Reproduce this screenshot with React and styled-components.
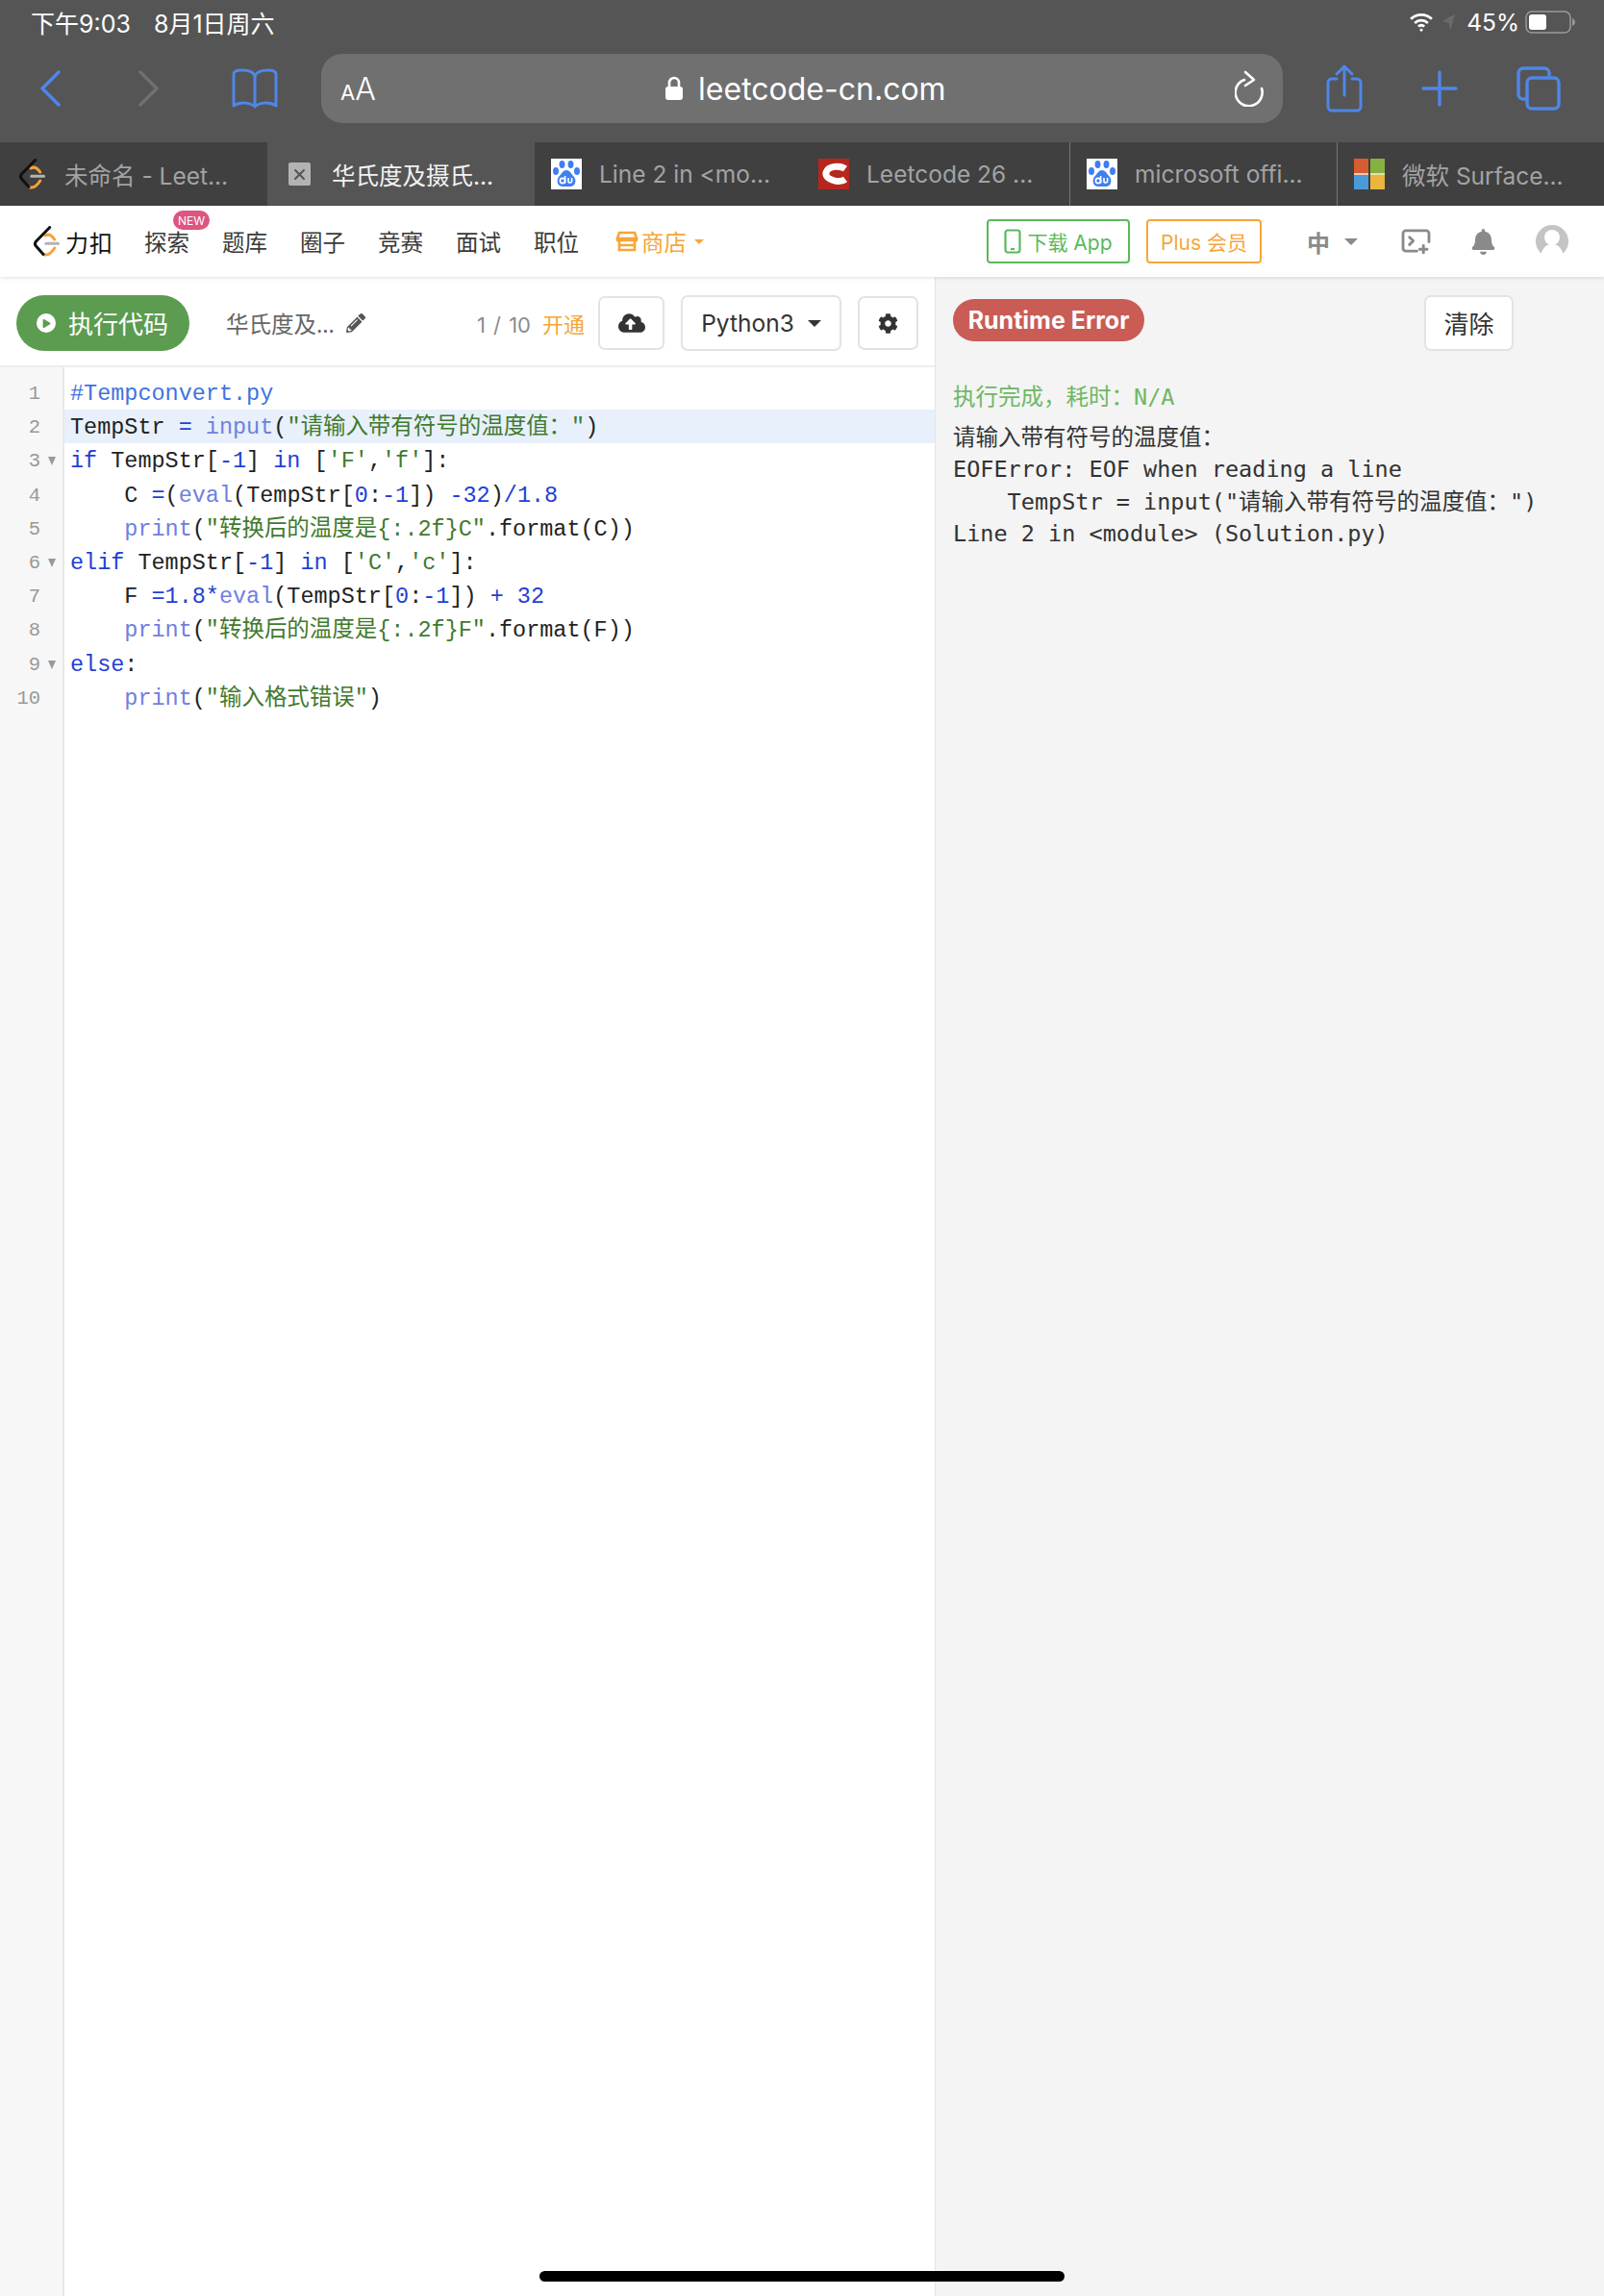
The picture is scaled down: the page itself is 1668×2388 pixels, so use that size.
import React from "react";
import styled, { createGlobalStyle } from "styled-components";
import { FaCloudUploadAlt, FaCog, FaPencilAlt, FaBell, FaPlay } from "react-icons/fa";

const sans = `"Inter", "Noto Sans CJK SC", sans-serif`;
const cjk = `"Noto Sans", "Noto Sans CJK SC", sans-serif`;

const Global = createGlobalStyle`
  html, body { margin: 0; padding: 0; background: #fff; }
  * { box-sizing: border-box; }
`;

const Page = styled.div`
  width: 1668px;
  height: 2388px;
  display: flex;
  flex-direction: column;
  overflow: hidden;
  position: relative;
  font-family: ${cjk};
`;

const Chrome = styled.div`
  background: #555555;
  height: 148px;
  display: flex;
  flex-direction: column;
`;
const StatusBar = styled.div`
  height: 56px;
  padding: 0 30px 10px 32px;
  display: flex;
  align-items: center;
  justify-content: space-between;
  color: #fff;
  font-size: 24.5px;
  font-family: ${sans};
`;
const StatusLeft = styled.div`
  display: flex;
  gap: 24px;
  font-size: 25px;
`;
const StatusRight = styled.div`
  display: flex;
  align-items: center;
  gap: 8px;
`;
const Percent = styled.span`
  margin: 0 -2px 0 3px;
`;
const Toolbar = styled.div`
  height: 72px;
  display: flex;
  align-items: center;
`;
const NavIcons = styled.div`
  width: 334px;
  display: flex;
  align-items: center;
  padding-left: 41px;
  gap: 81px;
`;
const BookSlot = styled.span`
  display: flex;
  margin-left: -6px;
`;
const AddressBar = styled.div`
  width: 1000px;
  height: 72px;
  background: #707070;
  border-radius: 22px;
  display: flex;
  align-items: center;
  justify-content: space-between;
  padding: 0 18px 0 20px;
  color: #fff;
`;
const AaLabel = styled.div`
  font-family: ${sans};
  font-size: 32px;
  font-weight: 300;
  span { font-size: 22px; font-weight: 400; }
`;
const Url = styled.div`
  display: flex;
  align-items: center;
  gap: 15px;
  font-family: ${sans};
  font-size: 32px;
`;
const ToolRight = styled.div`
  flex: 1;
  display: flex;
  align-items: center;
  padding-left: 45px;
  gap: 61px;
`;

const Tabs = styled.div`
  display: flex;
  height: 66px;
  background: #404040;
`;
const Tab = styled.div`
  width: 278px;
  height: 66px;
  flex: none;
  display: flex;
  align-items: center;
  gap: 18px;
  padding-left: 17px;
  font-size: 24.5px;
  font-family: ${sans};
  color: ${(p) => (p.$active ? "#f2f2f2" : "#a3a3a3")};
  background: ${(p) => (p.$active ? "#555555" : "#404040")};
  border-left: ${(p) => (p.$divider ? "1px solid #777" : "none")};
  white-space: nowrap;
`;
const TabIconBox = styled.span`
  width: 32px;
  height: 32px;
  flex: none;
  display: flex;
  align-items: center;
  justify-content: center;
`;
const TabClose = styled.div`
  width: 23px;
  height: 24px;
  background: #b3b3b3;
  border-radius: 2px;
  display: flex;
  align-items: center;
  justify-content: center;
`;

const NavBar = styled.div`
  height: 74px;
  background: #fff;
  display: flex;
  align-items: center;
  position: relative;
  z-index: 2;
  box-shadow: 0 1px 4px rgba(0, 0, 0, 0.13);
  padding: 0 37px 0 35px;
`;
const Brand = styled.div`
  display: flex;
  align-items: center;
  gap: 6px;
  font-size: 24px;
  letter-spacing: 1px;
  color: #111;
  margin-right: 32px;
`;
const NavItem = styled.div`
  position: relative;
  font-size: 23.5px;
  color: ${(p) => p.$color || "#3a3a3a"};
  margin-left: ${(p) => p.$ml || 0}px;
  margin-right: 34px;
  display: flex;
  align-items: center;
  gap: 3px;
`;
const NewBadge = styled.span`
  position: absolute;
  top: -15px;
  right: -21px;
  width: 38px;
  height: 20px;
  border-radius: 10px;
  background: #dd5580;
  color: #fff;
  font-size: 12px;
  font-family: ${sans};
  display: flex;
  align-items: center;
  justify-content: center;
`;
const Spacer = styled.div`
  flex: 1;
`;
const Caret = styled.span`
  width: 0;
  height: 0;
  margin-left: ${(p) => p.$ml || 0}px;
  border-left: ${(p) => p.$s}px solid transparent;
  border-right: ${(p) => p.$s}px solid transparent;
  border-top: ${(p) => p.$s}px solid ${(p) => p.$color};
`;
const OutlineBtn = styled.div`
  width: ${(p) => p.$w}px;
  height: 46px;
  border: 2px solid ${(p) => p.$color};
  color: ${(p) => p.$color};
  border-radius: 4px;
  display: flex;
  align-items: center;
  justify-content: center;
  gap: 6px;
  font-size: 21px;
  font-family: ${sans};
  margin-right: ${(p) => p.$mr}px;
`;
const LangBox = styled.div`
  display: flex;
  align-items: center;
  gap: 15px;
  color: #8a8a8a;
  font-size: 24px;
  font-weight: 700;
  margin-right: 45px;
`;
const IconGap = styled.div`
  display: flex;
  align-items: center;
  margin-right: ${(p) => p.$mr}px;
`;

const Main = styled.div`
  flex: 1;
  display: flex;
  min-height: 0;
`;
const Editor = styled.div`
  width: 973px;
  display: flex;
  flex-direction: column;
  border-right: 1px solid #e5e5e5;
`;
const EditorBar = styled.div`
  height: 94px;
  flex: none;
  border-bottom: 2px solid #ededed;
  display: flex;
  align-items: center;
  padding: 4px 17px 0;
`;
const RunButton = styled.div`
  width: 180px;
  height: 58px;
  border-radius: 29px;
  background: #5c9c50;
  color: #fff;
  font-size: 26px;
  display: flex;
  align-items: center;
  gap: 13px;
  padding-left: 21px;
  margin-right: 38px;
`;
const PlayDot = styled.span`
  width: 20px;
  height: 20px;
  background: #fff;
  border-radius: 50%;
  color: #5c9c50;
  display: flex;
  align-items: center;
  justify-content: center;
  font-size: 9px;
  padding-left: 1px;
`;
const FileName = styled.div`
  font-size: 23.5px;
  color: #666;
  display: flex;
  align-items: center;
  gap: 12px;
`;
const Quota = styled.div`
  margin-left: auto;
  font-size: 22px;
  font-family: ${sans};
  word-spacing: 2px;
  color: #8c8c8c;
  margin-right: 14px;
  b { color: #f5a63a; font-weight: 400; margin-left: 12px; font-family: ${cjk}; }
`;
const SquareBtn = styled.div`
  width: ${(p) => p.$w}px;
  height: ${(p) => p.$h || 58}px;
  border: 2px solid #e3e3e3;
  border-radius: 7px;
  background: #fff;
  color: #333;
  display: flex;
  align-items: center;
  justify-content: center;
  font-size: 24.5px;
  margin-left: ${(p) => p.$ml || 0}px;
  gap: 14px;
  font-family: ${sans};
`;

const CodeArea = styled.div`
  flex: 1;
  display: flex;
`;
const Gutter = styled.div`
  width: 67px;
  flex: none;
  background: #f7f7f7;
  border-right: 2px solid #e8e8e8;
  padding-top: 9px;
`;
const GutterLine = styled.div`
  height: 35.2px;
  line-height: 37px;
  position: relative;
  text-align: right;
  padding-right: 23px;
  color: #999;
  font-size: 20.5px;
  font-family: "Liberation Mono", monospace;
`;
const Fold = styled.span`
  position: absolute;
  right: 7px;
  top: 14px;
  width: 0;
  height: 0;
  border-left: 4px solid transparent;
  border-right: 4px solid transparent;
  border-top: 9px solid #999;
`;
const Code = styled.div`
  flex: 1;
  padding-top: 9px;
  font-family: "Liberation Mono", "Noto Sans CJK SC", monospace;
  font-size: 23.47px;
  color: #222;
`;
const CodeLine = styled.div`
  height: 35.2px;
  line-height: 37px;
  padding-left: 6px;
  white-space: pre;
  background: ${(p) => (p.$active ? "#e8f0fb" : "transparent")};
`;
const Kw = styled.span`color: #1f3fd6;`;
const Bi = styled.span`color: #6f7fe0;`;
const Str = styled.span`color: #3f7a2e;`;
const Cm = styled.span`color: #3f72e0;`;
const Zh = styled.span`
  font-family: "Noto Sans CJK SC", sans-serif;
  font-size: 23.47px;
  line-height: 0;
`;

const Output = styled.div`
  flex: 1;
  background: #f4f4f4;
  padding-left: 18px;
`;
const OutputBar = styled.div`
  height: 94px;
  display: flex;
  justify-content: space-between;
  padding-top: 19px;
`;
const ErrorPill = styled.div`
  width: 199px;
  height: 44px;
  margin-top: 4px;
  border-radius: 22px;
  background: #c95c55;
  color: #fff;
  font-family: ${sans};
  font-size: 25px;
  font-weight: 700;
  display: flex;
  align-items: center;
  justify-content: center;
`;
const ClearBtn = styled.div`
  width: 93px;
  height: 58px;
  border: 2px solid #e3e3e3;
  border-radius: 7px;
  background: #fff;
  color: #333;
  font-size: 26px;
  display: flex;
  align-items: center;
  justify-content: center;
  margin-right: 94px;
`;
const Pre = styled.div`
  font-family: "DejaVu Sans Mono", "Noto Sans CJK SC", monospace;
  font-size: 23.5px;
  line-height: 33.5px;
  color: #333;
  white-space: pre;
`;
const DoneLine = styled(Pre)`
  color: #6fb765;
  margin: 15px 0 8px;
`;

const HomeBar = styled.div`
  position: absolute;
  left: 561px;
  bottom: 15px;
  width: 546px;
  height: 11px;
  border-radius: 6px;
  background: #000;
`;

const Blue = "#4f86e8";

const LcLogo = () => (
  <svg width="27" height="32" viewBox="0 0 27 32" fill="none" strokeLinecap="round" strokeLinejoin="round">
    <path d="M12 10 Q17 7 21.700 14" stroke="#f5a33a" strokeWidth="3" />
    <path d="M10 29.500 Q16 32 21.700 23" stroke="#f5a33a" strokeWidth="3" />
    <path d="M16.700 1.500 L2.500 16 Q0.500 18.500 2.500 21 L10 29.500" stroke="#111" strokeWidth="3" />
    <path d="M12.700 18.300 H25.500" stroke="#b3b3b3" strokeWidth="3" />
  </svg>
);

const BaiduIcon = () => (
  <svg width="32" height="32" viewBox="0 0 32 32">
    <rect width="32" height="32" fill="#fff" />
    <g fill="#3f7ff0">
      <ellipse cx="11.500" cy="6" rx="3" ry="4" />
      <ellipse cx="20.500" cy="6" rx="3" ry="4" />
      <ellipse cx="5" cy="13" rx="3" ry="4" />
      <ellipse cx="27" cy="13" rx="3" ry="4" />
      <path d="M16 12c-4 0-5 4-8 7-3 4-1 10 4 10h8c5 0 7-6 4-10-3-3-4-7-8-7z" />
    </g>
    <g fill="none" stroke="#fff" strokeWidth="1.600">
      <circle cx="12" cy="23" r="2.600" />
      <path d="M14.600 18v7.600M18 20v3.500c0 2 3.600 2 3.600 0V20" />
    </g>
  </svg>
);

const CIcon = () => (
  <svg width="32" height="32" viewBox="0 0 32 32">
    <rect width="32" height="32" fill="#b6261d" />
    <path d="M28 10.500 C23 7 10 7 8 14.500 C6.500 22 22 26 28 21.500" fill="none" stroke="#fff" strokeWidth="7" />
  </svg>
);

const MsIcon = () => (
  <svg width="32" height="32" viewBox="0 0 32 32">
    <rect width="15" height="15" fill="#d85c32" />
    <rect x="17" width="15" height="15" fill="#87b042" />
    <rect y="17" width="15" height="15" fill="#4b9ad8" />
    <rect x="17" y="17" width="15" height="15" fill="#ecb440" />
    <rect y="15" width="15" height="2" fill="#f2c8b8" />
    <rect x="17" y="15" width="15" height="2" fill="#e6e0a8" />
  </svg>
);

const CloseX = () => (
  <svg width="13" height="13" viewBox="0 0 13 13" stroke="#555" strokeWidth="2" strokeLinecap="round">
    <path d="M2 2 L11 11 M11 2 L2 11" />
  </svg>
);

const WifiIcon = () => (
  <svg width="26" height="20" viewBox="0 0 28 22" fill="none" stroke="#fff" strokeWidth="3">
    <path d="M2 7.500a17 17 0 0 1 24 0" />
    <path d="M6.500 12a11 11 0 0 1 15 0" />
    <path d="M10.500 16a5.500 5.500 0 0 1 7 0" />
    <circle cx="14" cy="20" r="1.600" fill="#fff" stroke="none" />
  </svg>
);

const Battery = () => (
  <svg width="52" height="24" viewBox="0 0 52 24">
    <rect x="1" y="1" width="46" height="22" rx="6" fill="none" stroke="#999" strokeWidth="1.500" />
    <rect x="4" y="4" width="18" height="16" rx="3" fill="#fff" />
    <path d="M49 8c2 1 3 2.500 3 4s-1 3-3 4z" fill="#999" />
  </svg>
);

const ArrowGlyph = () => (
  <svg width="15" height="20" viewBox="0 0 16 20"><path d="M15 1 L1 9 L8 11 L10 19 Z" fill="#6a6a6a" /></svg>
);

const Back = ({ color }) => (
  <svg width="22" height="38" viewBox="0 0 22 38" fill="none" stroke={color} strokeWidth="3.400" strokeLinecap="round" strokeLinejoin="round">
    <path d="M20 2 L3 19 L20 36" />
  </svg>
);
const Forward = ({ color }) => (
  <svg width="22" height="38" viewBox="0 0 22 38" fill="none" stroke={color} strokeWidth="3.400" strokeLinecap="round" strokeLinejoin="round">
    <path d="M2 2 L19 19 L2 36" />
  </svg>
);
const BookIcon = () => (
  <svg width="48" height="42" viewBox="0 0 48 42" fill="none" stroke={Blue} strokeWidth="3" strokeLinejoin="round">
    <path d="M24 8 C22 3 16 2 10 2 C6 2 2 3 2 6 V39 C8 35 19 35 24 40 C29 35 40 35 46 39 V6 C46 3 42 2 38 2 C32 2 26 3 24 8 Z" />
    <path d="M24 8 V40" />
  </svg>
);
const ReloadIcon = () => (
  <svg width="32" height="38" viewBox="0 0 32 38" fill="none" stroke="#fff" strokeWidth="2.600" strokeLinecap="round" strokeLinejoin="round">
    <path d="M10 10 a14 14 0 1 0 18 9" />
    <path d="M11 2 L20 10 L11 16" />
  </svg>
);
const ShareIcon = () => (
  <svg width="38" height="50" viewBox="0 0 38 50" fill="none" stroke={Blue} strokeWidth="3" strokeLinecap="round" strokeLinejoin="round">
    <path d="M11 15 H6 a4 4 0 0 0 -4 4 V44 a4 4 0 0 0 4 4 H32 a4 4 0 0 0 4 -4 V19 a4 4 0 0 0 -4 -4 H27" />
    <path d="M19 32 V2 M11 10 L19 2 L27 10" />
  </svg>
);
const PlusIcon = () => (
  <svg width="38" height="38" viewBox="0 0 38 38" fill="none" stroke={Blue} strokeWidth="3.400" strokeLinecap="round">
    <path d="M19 2 V36 M2 19 H36" />
  </svg>
);
const TabsIcon = () => (
  <svg width="46" height="46" viewBox="0 0 46 46" fill="none" stroke={Blue} strokeWidth="3.400" strokeLinejoin="round">
    <path d="M10 34 H7 a5 5 0 0 1 -5 -5 V7 a5 5 0 0 1 5 -5 H29 a5 5 0 0 1 5 5 V10" />
    <rect x="11" y="12" width="33" height="32" rx="5" />
  </svg>
);
const LockIcon = () => (
  <svg width="20" height="26" viewBox="0 0 20 26">
    <path d="M5 11 V7 a5 5 0 0 1 10 0 V11" fill="none" stroke="#fff" strokeWidth="2.600" />
    <rect x="1" y="11" width="18" height="14" rx="3" fill="#fff" />
  </svg>
);
const ShopIcon = () => (
  <svg width="24" height="22" viewBox="0 0 24 22" fill="none" stroke="#f5a63a" strokeWidth="2.600">
    <path d="M2 8 L4 2 H20 L22 8 Z M1 10 H23 M4 10 V20 H20 V10 M4 15 H20" />
  </svg>
);
const PhoneIcon = () => (
  <svg width="18" height="26" viewBox="0 0 18 26" fill="none" stroke="#5cb85c" strokeWidth="2.200">
    <rect x="1.500" y="1.500" width="15" height="23" rx="2.500" />
    <path d="M7 21 H11" />
  </svg>
);
const ConsoleIcon = () => (
  <svg width="31" height="26" viewBox="0 0 32 27" fill="none" stroke="#8a8a8a" strokeWidth="3" strokeLinecap="round" strokeLinejoin="round">
    <path d="M17 24 H5 a3 3 0 0 1 -3 -3 V5 a3 3 0 0 1 3 -3 H27 a3 3 0 0 1 3 3 V14" />
    <path d="M9 9 L13 13 L9 17 M24 18 V26 M20 22 H28" />
  </svg>
);
const AvatarIcon = () => (
  <svg width="34" height="34" viewBox="0 0 34 34">
    <defs>
      <clipPath id="avatar-clip"><rect width="34" height="30" /></clipPath>
    </defs>
    <g clipPath="url(#avatar-clip)">
      <circle cx="17" cy="17" r="17" fill="#c4c4c4" />
      <circle cx="17" cy="13" r="8" fill="#fff" />
      <path d="M5 34 C6 23 12 20 17 20 C22 20 28 23 29 34 Z" fill="#fff" />
    </g>
  </svg>
);

const codeRows = [
  <Cm>#Tempconvert.py</Cm>,
  <>TempStr <Kw>=</Kw> <Bi>input</Bi>(<Str>"<Zh>请输入带有符号的温度值：</Zh>"</Str>)</>,
  <><Kw>if</Kw> TempStr[<Kw>-1</Kw>] <Kw>in</Kw> [<Str>'F'</Str>,<Str>'f'</Str>]:</>,
  <>{"    "}C <Kw>=</Kw>(<Bi>eval</Bi>(TempStr[<Kw>0</Kw>:<Kw>-1</Kw>]) <Kw>-32</Kw>)<Kw>/1.8</Kw></>,
  <>{"    "}<Bi>print</Bi>(<Str>"<Zh>转换后的温度是</Zh>{"{:.2f}"}C"</Str>.format(C))</>,
  <><Kw>elif</Kw> TempStr[<Kw>-1</Kw>] <Kw>in</Kw> [<Str>'C'</Str>,<Str>'c'</Str>]:</>,
  <>{"    "}F <Kw>=1.8*</Kw><Bi>eval</Bi>(TempStr[<Kw>0</Kw>:<Kw>-1</Kw>]) <Kw>+ 32</Kw></>,
  <>{"    "}<Bi>print</Bi>(<Str>"<Zh>转换后的温度是</Zh>{"{:.2f}"}F"</Str>.format(F))</>,
  <><Kw>else</Kw>:</>,
  <>{"    "}<Bi>print</Bi>(<Str>"<Zh>输入格式错误</Zh>"</Str>)</>,
];
const foldLines = [3, 6, 9];

const tabs = [
  { icon: <LcLogo />, label: "未命名 - Leet..." },
  { icon: <TabClose><CloseX /></TabClose>, label: "华氏度及摄氏...", active: true },
  { icon: <BaiduIcon />, label: "Line 2 in <mo..." },
  { icon: <CIcon />, label: "Leetcode 26 ..." },
  { icon: <BaiduIcon />, label: "microsoft offi...", divider: true },
  { icon: <MsIcon />, label: "微软 Surface...", divider: true },
];

const navItems = ["探索", "题库", "圈子", "竞赛", "面试", "职位"];

export default function App() {
  return (
    <Page>
      <Global />
      <Chrome>
        <StatusBar>
          <StatusLeft>
            <span>下午9:03</span>
            <span>8月1日周六</span>
          </StatusLeft>
          <StatusRight>
            <WifiIcon />
            <ArrowGlyph />
            <Percent>45%</Percent>
            <Battery />
          </StatusRight>
        </StatusBar>
        <Toolbar>
          <NavIcons>
            <Back color={Blue} />
            <Forward color="#707070" />
            <BookSlot><BookIcon /></BookSlot>
          </NavIcons>
          <AddressBar>
            <AaLabel><span>A</span>A</AaLabel>
            <Url><LockIcon />leetcode-cn.com</Url>
            <ReloadIcon />
          </AddressBar>
          <ToolRight>
            <ShareIcon />
            <PlusIcon />
            <TabsIcon />
          </ToolRight>
        </Toolbar>
      </Chrome>
      <Tabs>
        {tabs.map((t) => (
          <Tab key={t.label} $active={t.active} $divider={t.divider}>
            <TabIconBox>{t.icon}</TabIconBox>
            {t.label}
          </Tab>
        ))}
      </Tabs>
      <NavBar>
        <Brand><LcLogo />力扣</Brand>
        {navItems.map((n, i) => (
          <NavItem key={n}>
            {n}
            {i === 0 && <NewBadge>NEW</NewBadge>}
          </NavItem>
        ))}
        <NavItem $color="#f5a63a" $ml={4}>
          <ShopIcon />商店<Caret $s={5} $ml={5} $color="#f5a63a" />
        </NavItem>
        <Spacer />
        <OutlineBtn $w={149} $color="#5cb85c" $mr={17}><PhoneIcon />下载 App</OutlineBtn>
        <OutlineBtn $w={120} $color="#f5a63a" $mr={47}>Plus 会员</OutlineBtn>
        <LangBox>中<Caret $s={7} $color="#8a8a8a" /></LangBox>
        <IconGap $mr={41}><ConsoleIcon /></IconGap>
        <IconGap $mr={41}><FaBell size={27} color="#8a8a8a" /></IconGap>
        <AvatarIcon />
      </NavBar>
      <Main>
        <Editor>
          <EditorBar>
            <RunButton><PlayDot><FaPlay /></PlayDot>执行代码</RunButton>
            <FileName>华氏度及...<FaPencilAlt size={20} color="#555" /></FileName>
            <Quota>1 / 10<b>开通</b></Quota>
            <SquareBtn $w={69} $h={56}><FaCloudUploadAlt size={28} /></SquareBtn>
            <SquareBtn $w={167} $ml={17}>Python3<Caret $s={7} $color="#333" /></SquareBtn>
            <SquareBtn $w={63} $h={56} $ml={17}><FaCog size={21} /></SquareBtn>
          </EditorBar>
          <CodeArea>
            <Gutter>
              {codeRows.map((_, i) => (
                <GutterLine key={i}>
                  {i + 1}
                  {foldLines.includes(i + 1) && <Fold />}
                </GutterLine>
              ))}
            </Gutter>
            <Code>
              {codeRows.map((row, i) => (
                <CodeLine key={i} $active={i === 1}>{row}</CodeLine>
              ))}
            </Code>
          </CodeArea>
        </Editor>
        <Output>
          <OutputBar>
            <ErrorPill>Runtime Error</ErrorPill>
            <ClearBtn>清除</ClearBtn>
          </OutputBar>
          <DoneLine>执行完成，耗时：N/A</DoneLine>
          <Pre>{`请输入带有符号的温度值：
EOFError: EOF when reading a line
    TempStr = input("请输入带有符号的温度值：")
Line 2 in <module> (Solution.py)`}</Pre>
        </Output>
      </Main>
      <HomeBar />
    </Page>
  );
}
